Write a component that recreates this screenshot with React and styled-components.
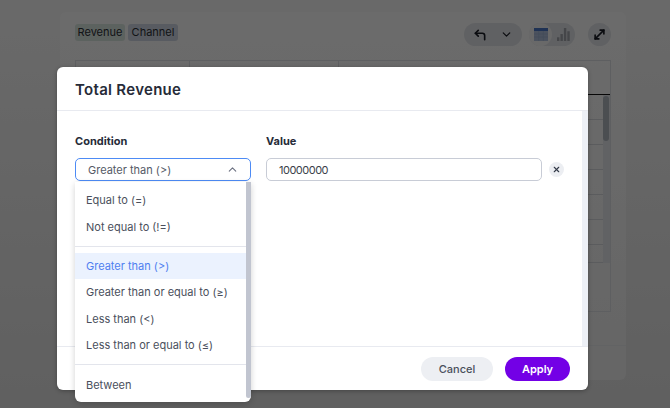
import React from "react";
import styled, { createGlobalStyle } from "styled-components";
import { ChevronDown, ChevronUp, CornerUpLeft, MoveDiagonal, X } from "lucide-react";

const GlobalStyle = createGlobalStyle`
  html, body {
    margin: 0;
    padding: 0;
    height: 100%;
    overflow: hidden;
  }
  body {
    font-family: Inter, "Noto Sans", "Liberation Sans", sans-serif;
  }
`;

const Page = styled.div`
  position: relative;
  box-sizing: border-box;
  width: 670px;
  height: 408px;
  padding: 12px 44px 28px 60px;
  background: linear-gradient(#fbfbfb, #e4e4e4);
`;

const Card = styled.div`
  box-sizing: border-box;
  height: 100%;
  display: flex;
  flex-direction: column;
  background: linear-gradient(#ffffff, #f2f2f2);
  border-radius: 6px;
  padding: 11px 15px 0;
`;

const CardBar = styled.div`
  display: flex;
  justify-content: space-between;
  height: 37px;
`;

const Pills = styled.div`
  display: flex;
  gap: 3px;
`;

const Pill = styled.span`
  height: 17px;
  width: 50px;
  margin-top: 1px;
  border-radius: 3px;
  background: ${(p) => p.$bg};
  color: #2c3038;
  font-size: 11px;
  line-height: 17px;
  text-align: center;
`;

const Tools = styled.div`
  display: flex;
  gap: 7px;
`;

const ToolGroup = styled.div`
  height: 23px;
  display: flex;
  align-items: center;
  justify-content: space-between;
  border-radius: 12px;
  background: #e5e7ec;
  width: ${(p) => p.$width}px;
  padding: ${(p) => p.$pad || "0"};
  box-sizing: border-box;
  margin-left: ${(p) => p.$offset || 0}px;
  color: #1a1d26;
`;

const ToggleCell = styled.div`
  width: 23px;
  height: 23px;
  display: flex;
  align-items: center;
  justify-content: center;
  border-radius: 50%;
  background: ${(p) => (p.$active ? "#fafafa" : "transparent")};
`;

const TableFrame = styled.div`
  box-sizing: border-box;
  height: 252px;
  display: flex;
  flex-direction: column;
  border: 1px solid #dfe2e6;
`;

const HeadRow = styled.div`
  height: 34px;
  flex: none;
  box-sizing: border-box;
  display: grid;
  grid-template-columns: 114px 149px 1fr;
  border-bottom: 1px solid #111;
`;

const HeadCell = styled.div`
  border-right: 1px solid #dfe2e6;
  &:last-child {
    border-right: none;
  }
`;

const TableBody = styled.div`
  display: flex;
  height: 168px;
`;

const Rows = styled.div`
  flex: 1;
  display: flex;
  flex-direction: column;
`;

const BodyRow = styled.div`
  height: ${(p) => p.$height}px;
  flex: none;
  box-sizing: border-box;
  border-bottom: 1px solid #d8dbe0;
`;

const ScrollTrack = styled.div`
  width: 7px;
  flex: none;
  background: #e8eaee;
`;

const ScrollThumb = styled.div`
  width: 6px;
  height: 45px;
  margin-top: 1px;
  border-radius: 3px;
  background: #b4b9c2;
`;

const CardFoot = styled.div`
  margin: 33px -15px 0;
  border-top: 1px solid #e9ebee;
`;

const Overlay = styled.div`
  position: absolute;
  inset: 0;
  box-sizing: border-box;
  padding: 67px 0 0 57px;
  background: rgba(0, 0, 0, 0.58);
`;

const Modal = styled.div`
  width: 531px;
  height: 323px;
  display: flex;
  flex-direction: column;
  background: #fff;
  border-radius: 6px;
  box-shadow: 0 1px 4px rgba(0, 0, 0, 0.3);
`;

const ModalHeader = styled.div`
  height: 43px;
  flex: none;
  box-sizing: content-box;
  display: flex;
  align-items: center;
  padding-left: 18px;
  border-bottom: 1px solid #e8eaf0;
`;

const Title = styled.h2`
  margin: 2px 0 0;
  font-size: 15px;
  font-weight: 600;
  letter-spacing: 0.3px;
  color: #262b38;
`;

const ModalBody = styled.div`
  flex: 1;
  display: flex;
  min-height: 0;
`;

const Fields = styled.div`
  flex: 1;
  display: flex;
  gap: 15px;
  padding: 23px 0 0 18px;
`;

const Field = styled.div`
  display: flex;
  flex-direction: column;
  gap: 10px;
  width: ${(p) => p.$width}px;
`;

const Label = styled.label`
  font-size: 11px;
  line-height: 14px;
  font-weight: 700;
  color: #262b38;
`;

const SelectWrap = styled.div`
  position: relative;
`;

const SelectBox = styled.div`
  box-sizing: border-box;
  height: 23px;
  display: flex;
  align-items: center;
  justify-content: space-between;
  padding: 0 11px 0 12px;
  border: 1.5px solid #4d8bf5;
  border-radius: 5px;
  font-size: 11px;
  color: #555a66;
`;

const Menu = styled.ul`
  position: absolute;
  top: 24px;
  left: 0;
  z-index: 2;
  width: 176px;
  height: 220px;
  box-sizing: border-box;
  margin: 0;
  padding: 5px 5px 0 0;
  list-style: none;
  background: #fff;
  border-radius: 0 0 6px 6px;
  box-shadow: 0 2px 6px rgba(0, 0, 0, 0.18);
`;

const MenuScroll = styled.div`
  position: absolute;
  top: 0;
  right: 0;
  width: 5px;
  height: 216px;
  border-radius: 0 0 3px 3px;
  background: #c1c5d0;
`;

const MenuItem = styled.li`
  height: 26.4px;
  display: flex;
  align-items: center;
  padding-left: 11px;
  font-size: 11px;
  color: ${(p) => (p.$active ? "#4f7ff0" : "#4a4f5c")};
  background: ${(p) => (p.$active ? "#ebf2fe" : "transparent")};
`;

const Divider = styled.li`
  height: 1px;
  margin: 6px 0 6px;
  background: #e3e5ec;
`;

const ValueRow = styled.div`
  display: flex;
  align-items: center;
  gap: 7px;
`;

const ValueInput = styled.div`
  box-sizing: border-box;
  width: 276px;
  height: 23px;
  flex: none;
  display: flex;
  align-items: center;
  padding-left: 12px;
  border: 1.5px solid #c8ccd6;
  border-radius: 5px;
  font-size: 11px;
  letter-spacing: -0.5px;
  color: #3b3f4a;
`;

const ClearButton = styled.div`
  width: 15px;
  height: 15px;
  flex: none;
  display: flex;
  align-items: center;
  justify-content: center;
  border-radius: 50%;
  background: #eceef2;
  color: #333947;
`;

const BodyScroll = styled.div`
  width: 6px;
  flex: none;
  background: #edf0f6;
`;

const ModalFooter = styled.div`
  height: 44px;
  flex: none;
  box-sizing: border-box;
  display: flex;
  align-items: center;
  justify-content: flex-end;
  gap: 12px;
  padding: 0 18px 0 0;
  border-top: 1px solid #e8eaf0;
`;

const Button = styled.button`
  height: 24px;
  width: ${(p) => p.$width}px;
  border: none;
  border-radius: 12px;
  padding: 0;
  font-family: inherit;
  font-size: 11px;
  font-weight: ${(p) => (p.$primary ? 600 : 500)};
  color: ${(p) => (p.$primary ? "#fff" : "#4a4f5c")};
  background: ${(p) => (p.$primary ? "#7300e6" : "#edeff3")};
`;

const TableIcon = () => (
  <svg width="14" height="13" viewBox="0 0 14 13">
    <rect width="14" height="13" fill="#b3c3df" />
    <rect width="14" height="3" fill="#4a78c8" />
    <path d="M0 6h14M0 9h14M4.7 3v10M9.3 3v10" stroke="#9bb0d4" strokeWidth="0.6" />
  </svg>
);

const BarsIcon = () => (
  <svg width="13" height="13" viewBox="0 0 14 14" fill="#a4a7ae">
    <rect x="0" y="10" width="2.6" height="4" />
    <rect x="3.7" y="6.5" width="2.6" height="7.5" />
    <rect x="7.4" y="0" width="2.6" height="14" />
    <rect x="11.1" y="3.5" width="2.6" height="10.5" />
  </svg>
);

const rowHeights = [25, 25, 25, 25, 25, 25, 18];

const App = () => (
  <>
    <GlobalStyle />
    <Page>
      <Card>
        <CardBar>
          <Pills>
            <Pill $bg="#dce9e2">Revenue</Pill>
            <Pill $bg="#d2dae6">Channel</Pill>
          </Pills>
          <Tools>
            <ToolGroup $width={58} $pad="0 9px 0 9px">
              <CornerUpLeft size={14} strokeWidth={2.8} />
              <ChevronDown size={13} strokeWidth={2.2} />
            </ToolGroup>
            <ToolGroup $width={46}>
              <ToggleCell $active>
                <TableIcon />
              </ToggleCell>
              <ToggleCell>
                <BarsIcon />
              </ToggleCell>
            </ToolGroup>
            <ToolGroup $width={23} $offset={6} $pad="0 0 0 4px">
              <MoveDiagonal size={15} strokeWidth={2.6} />
            </ToolGroup>
          </Tools>
        </CardBar>
        <TableFrame>
          <HeadRow>
            <HeadCell />
            <HeadCell />
            <HeadCell />
          </HeadRow>
          <TableBody>
            <Rows>
              {rowHeights.map((height, i) => (
                <BodyRow key={i} $height={height} />
              ))}
            </Rows>
            <ScrollTrack>
              <ScrollThumb />
            </ScrollTrack>
          </TableBody>
        </TableFrame>
        <CardFoot />
      </Card>
      <Overlay>
        <Modal>
          <ModalHeader>
            <Title>Total Revenue</Title>
          </ModalHeader>
          <ModalBody>
            <Fields>
              <Field $width={176}>
                <Label>Condition</Label>
                <SelectWrap>
                  <SelectBox>
                    Greater than (&gt;)
                    <ChevronUp size={13} strokeWidth={2} color="#6b7080" />
                  </SelectBox>
                  <Menu>
                    <MenuScroll />
                    <MenuItem>Equal to (=)</MenuItem>
                    <MenuItem>Not equal to (!=)</MenuItem>
                    <Divider />
                    <MenuItem $active>Greater than (&gt;)</MenuItem>
                    <MenuItem>Greater than or equal to (≥)</MenuItem>
                    <MenuItem>Less than (&lt;)</MenuItem>
                    <MenuItem>Less than or equal to (≤)</MenuItem>
                    <Divider />
                    <MenuItem>Between</MenuItem>
                  </Menu>
                </SelectWrap>
              </Field>
              <Field $width={298}>
                <Label>Value</Label>
                <ValueRow>
                  <ValueInput>10000000</ValueInput>
                  <ClearButton>
                    <X size={9} strokeWidth={3} />
                  </ClearButton>
                </ValueRow>
              </Field>
            </Fields>
            <BodyScroll />
          </ModalBody>
          <ModalFooter>
            <Button $width={72}>Cancel</Button>
            <Button $width={65} $primary>
              Apply
            </Button>
          </ModalFooter>
        </Modal>
      </Overlay>
    </Page>
  </>
);

export default App;
